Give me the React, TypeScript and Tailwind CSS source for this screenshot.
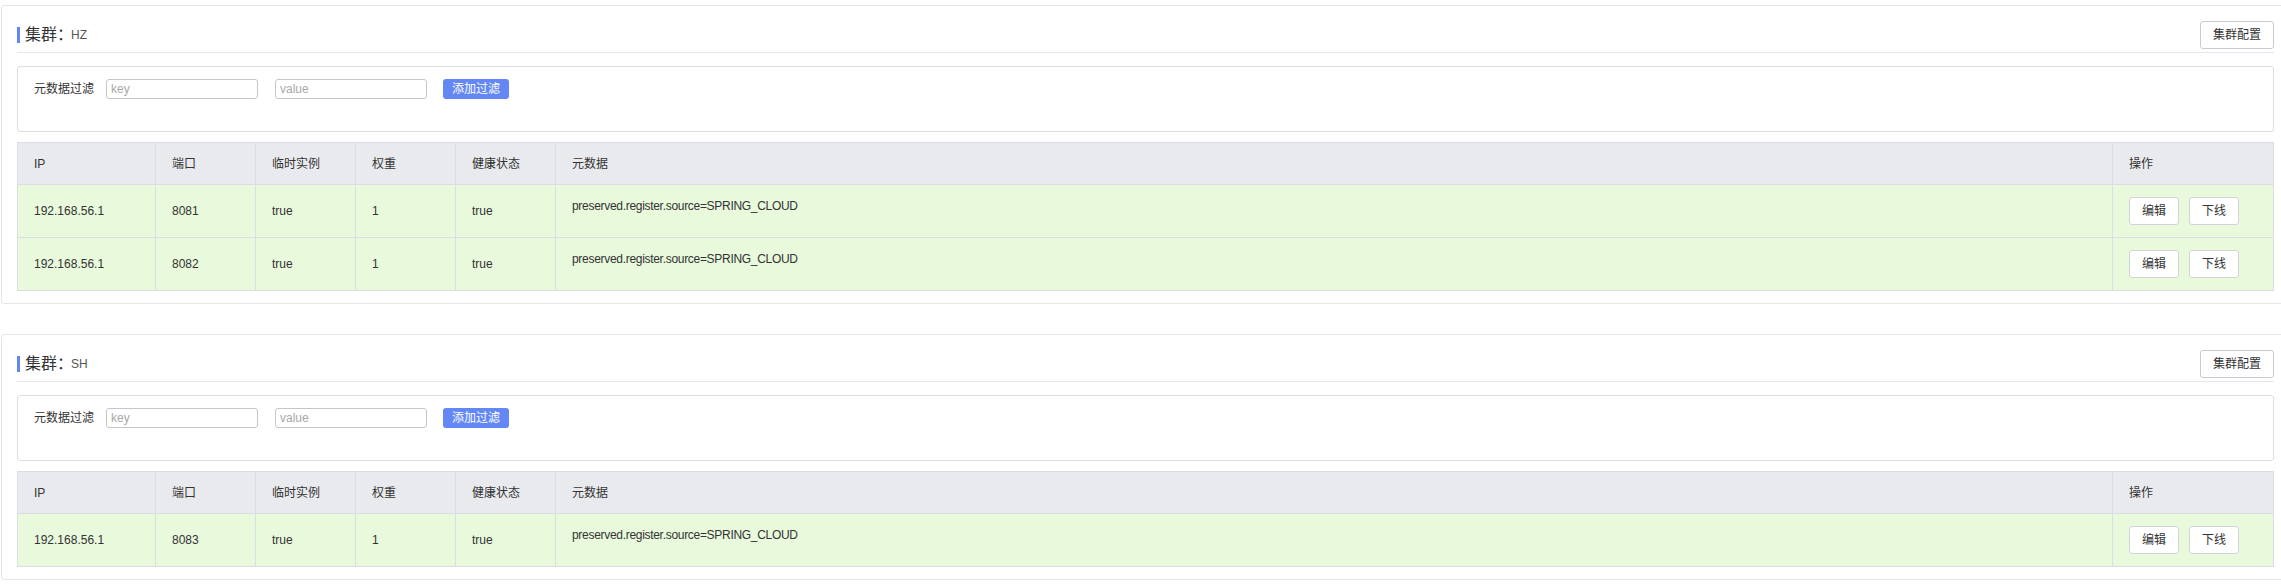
const font = { fontFamily: '"Liberation Sans", "Noto Sans CJK SC", sans-serif' }

type Instance = { ip: string; port: string; ephemeral: string; weight: string; healthy: string; meta: string }

const clusters: { name: string; rows: Instance[] }[] = [
  {
    name: 'HZ',
    rows: [
      { ip: '192.168.56.1', port: '8081', ephemeral: 'true', weight: '1', healthy: 'true', meta: 'preserved.register.source=SPRING_CLOUD' },
      { ip: '192.168.56.1', port: '8082', ephemeral: 'true', weight: '1', healthy: 'true', meta: 'preserved.register.source=SPRING_CLOUD' },
    ],
  },
  {
    name: 'SH',
    rows: [
      { ip: '192.168.56.1', port: '8083', ephemeral: 'true', weight: '1', healthy: 'true', meta: 'preserved.register.source=SPRING_CLOUD' },
    ],
  },
]

const cols = 'grid grid-cols-[138px_100px_100px_100px_100px_1fr_161px]'
const headers = ['IP', '端口', '临时实例', '权重', '健康状态', '元数据', '操作']

function ClusterCard({ name, rows }: { name: string; rows: Instance[] }) {
  return (
    <div className="w-[2289px] border border-[#e4e5e8] rounded-[3px] px-[15px] pt-[15px] pb-[12px] mb-[30px] bg-white">
      <div className="flex items-center justify-between pb-[3px] border-b border-[#e6e7ea]">
        <div className="flex items-center">
          <span className="w-[3px] h-[16px] bg-[#6286f7] mr-[5px]" />
          <span className="text-[16px] leading-[16px] text-[#333]">集群：</span>
          <span className="text-[12px] text-[#555] -ml-[2px]">{name}</span>
        </div>
        <button className="h-[28px] w-[74px] border border-[#c9cbd1] rounded-[3px] bg-white text-[12px] text-[#333]">
          集群配置
        </button>
      </div>

      <div className="mt-[13px] border border-[#dcdee3] rounded-[3px] pl-[16px] pt-[12px] pb-[32px] flex items-center">
        <span className="text-[12px] text-[#333] w-[60px]">元数据过滤</span>
        <input
          placeholder="key"
          className="ml-[12px] w-[152px] h-[20px] border border-[#c4c6cc] rounded-[3px] px-[4px] text-[12px] placeholder:text-[#a8a8a8] outline-none"
        />
        <input
          placeholder="value"
          className="ml-[17px] w-[152px] h-[20px] border border-[#c4c6cc] rounded-[3px] px-[4px] text-[12px] placeholder:text-[#a8a8a8] outline-none"
        />
        <button className="ml-[16px] w-[66px] h-[20px] rounded-[3px] bg-[#6388f6] text-white text-[12px]">
          添加过滤
        </button>
      </div>

      <div className="mt-[10px] border-l border-t border-[#dcdde2] text-[12px] text-[#333]">
        <div className={`${cols} bg-[#e9eaee]`}>
          {headers.map((h) => (
            <div key={h} className="h-[42px] flex items-center pl-[16px] border-r border-b border-[#dcdde2]">
              {h}
            </div>
          ))}
        </div>
        {rows.map((r) => (
          <div key={r.port} className={`${cols} bg-[#e8f9dc]`}>
            {[r.ip, r.port, r.ephemeral, r.weight, r.healthy].map((v, i) => (
              <div key={i} className="h-[53px] flex items-center pl-[16px] border-r border-b border-[#dcdde2]">
                {v}
              </div>
            ))}
            <div className="h-[53px] pl-[16px] pt-[13px] leading-4 tracking-[-0.3px] border-r border-b border-[#dcdde2]">
              {r.meta}
            </div>
            <div className="h-[53px] flex items-center gap-[10px] pl-[16px] border-r border-b border-[#dcdde2]">
              <button className="w-[50px] h-[28px] bg-white border border-[#d3d5da] rounded-[3px] text-[12px] text-[#333]">编辑</button>
              <button className="w-[50px] h-[28px] bg-white border border-[#d3d5da] rounded-[3px] text-[12px] text-[#333]">下线</button>
            </div>
          </div>
        ))}
      </div>
    </div>
  )
}

export default function App() {
  return (
    <div className="w-full min-h-[585px] overflow-hidden bg-white pt-[5px] pl-[1px]" style={font}>
      {clusters.map((c) => (
        <ClusterCard key={c.name} name={c.name} rows={c.rows} />
      ))}
    </div>
  )
}
